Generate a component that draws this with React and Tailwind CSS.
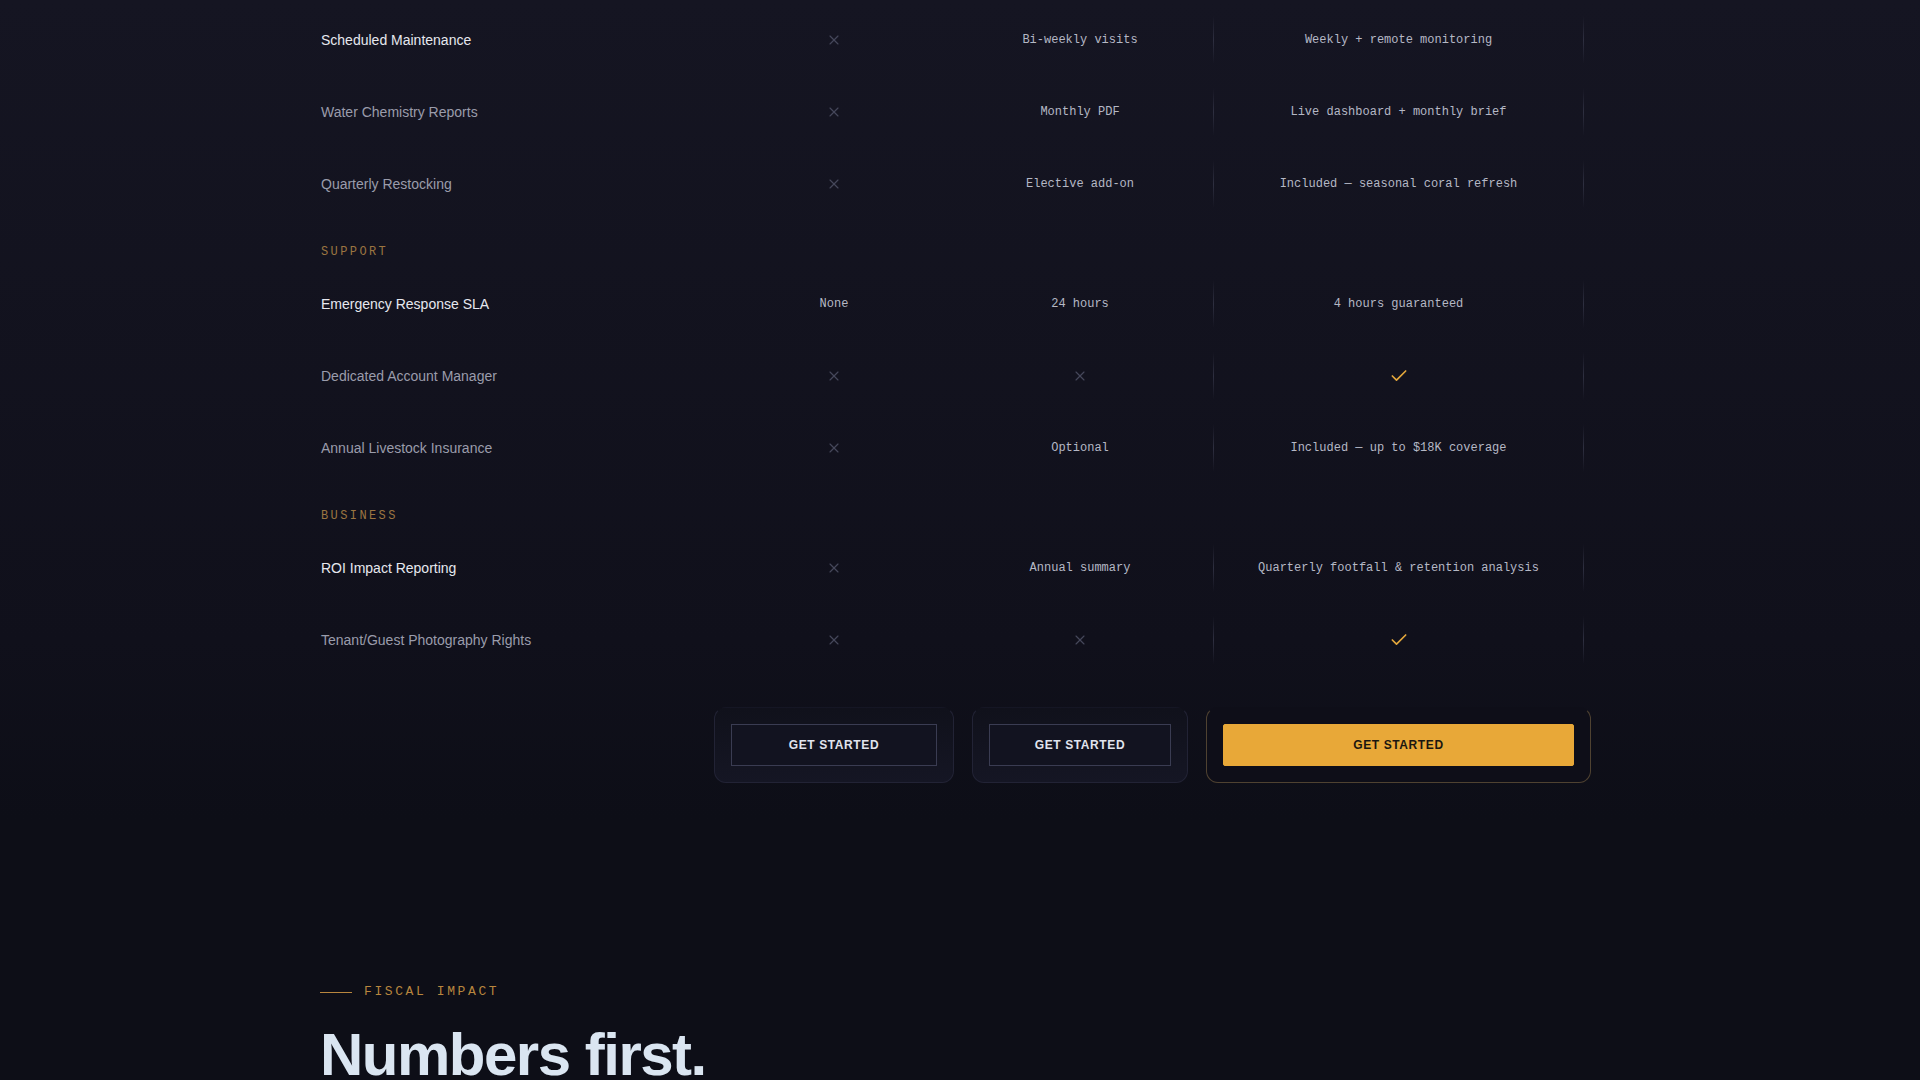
import React from "react";
import { X, Check } from "lucide-react";

const sans = { fontFamily: '"Liberation Sans", Arial, sans-serif' };

const sections = [
  {
    title: null,
    rows: [
      ["Scheduled Maintenance", "x", "Bi-weekly visits", "Weekly + remote monitoring"],
      ["Water Chemistry Reports", "x", "Monthly PDF", "Live dashboard + monthly brief"],
      ["Quarterly Restocking", "x", "Elective add-on", "Included — seasonal coral refresh"],
    ],
  },
  {
    title: "SUPPORT",
    rows: [
      ["Emergency Response SLA", "None", "24 hours", "4 hours guaranteed"],
      ["Dedicated Account Manager", "x", "x", "check"],
      ["Annual Livestock Insurance", "x", "Optional", "Included — up to $18K coverage"],
    ],
  },
  {
    title: "BUSINESS",
    rows: [
      ["ROI Impact Reporting", "x", "Annual summary", "Quarterly footfall & retention analysis"],
      ["Tenant/Guest Photography Rights", "x", "x", "check"],
    ],
  },
];

function Cell({ v }) {
  if (v === "x") return <X size={16} strokeWidth={1.75} className="text-[#45475a]" />;
  if (v === "check") return <Check size={20} strokeWidth={2} className="text-[#e3a73c]" />;
  return <span className="font-mono text-[12px] leading-4 text-[#b5b8c5]">{v}</span>;
}

function Row({ r, bright }) {
  return (
    <>
      <div className="h-[72px] flex items-center pl-px">
        <span
          style={sans}
          className={"text-[14px] " + (bright ? "text-[#e6e8ef]" : "text-[#9a9cab]")}
        >
          {r[0]}
        </span>
      </div>
      <div className="h-[72px] flex items-center justify-center">
        <Cell v={r[1]} />
      </div>
      <div className="h-[72px] flex items-center justify-center">
        <Cell v={r[2]} />
      </div>
      <div className="h-[72px] flex items-center justify-between px-[7px]">
        <div className="w-px h-[48px] bg-gradient-to-b from-transparent via-[#2e2f40] to-transparent" />
        <Cell v={r[3]} />
        <div className="w-px h-[48px] bg-gradient-to-b from-transparent via-[#2e2f40] to-transparent" />
      </div>
    </>
  );
}

export default function App() {
  return (
    <div className="min-h-screen w-full bg-[linear-gradient(180deg,#151522_0px,#10101b_640px,#0d0e17_820px,#0d0e17_100%)]">
      <div className="mx-auto w-[1280px] pt-[4px]">
        <div className="grid grid-cols-[376px_240px_216px_385px] gap-x-[18px]">
          {sections.map((s, si) => (
            <React.Fragment key={si}>
              {s.title && (
                <div className="col-span-4 h-[48px] pt-[25px] pl-px">
                  <div className="font-mono text-[12px] leading-[14px] tracking-[0.2em] text-[#9b7541]">
                    {s.title}
                  </div>
                </div>
              )}
              {s.rows.map((r, ri) => (
                <Row key={ri} r={r} bright={ri === 0} />
              ))}
            </React.Fragment>
          ))}

          <div />
          <div className="mt-[31px] rounded-xl border border-[#222335] border-t-transparent bg-gradient-to-b from-[#10111b] to-[#151624] p-4">
            <button
              style={sans}
              className="w-full border border-[#3a3c52] bg-[#121320] py-3 text-[12px] leading-4 font-bold tracking-[0.05em] text-[#e1e4ee]"
            >
              GET STARTED
            </button>
          </div>
          <div className="mt-[31px] rounded-xl border border-[#222335] border-t-transparent bg-gradient-to-b from-[#10111b] to-[#151624] p-4">
            <button
              style={sans}
              className="w-full border border-[#3a3c52] bg-[#121320] py-3 text-[12px] leading-4 font-bold tracking-[0.05em] text-[#e1e4ee]"
            >
              GET STARTED
            </button>
          </div>
          <div className="mt-[31px] rounded-xl border border-[#4f4231] border-t-transparent bg-[#0e0e18] p-4">
            <button
              style={sans}
              className="w-full rounded-[2px] border border-[#e8a838] bg-[#e8a838] py-3 text-[12px] leading-4 font-bold tracking-[0.05em] text-[#1b1710]"
            >
              GET STARTED
            </button>
          </div>
        </div>

        <div className="pt-[201px]">
          <div className="flex items-center gap-3">
            <div className="h-px w-8 bg-[#b8863e]" />
            <span className="font-mono text-[13px] leading-4 tracking-[0.2em] text-[#b8863e]">
              FISCAL IMPACT
            </span>
          </div>
          <h2
            style={sans}
            className="mt-[25px] text-[60px] leading-none font-bold tracking-[-0.025em] text-[#dae5f1]"
          >
            Numbers first.
          </h2>
        </div>
      </div>
    </div>
  );
}
